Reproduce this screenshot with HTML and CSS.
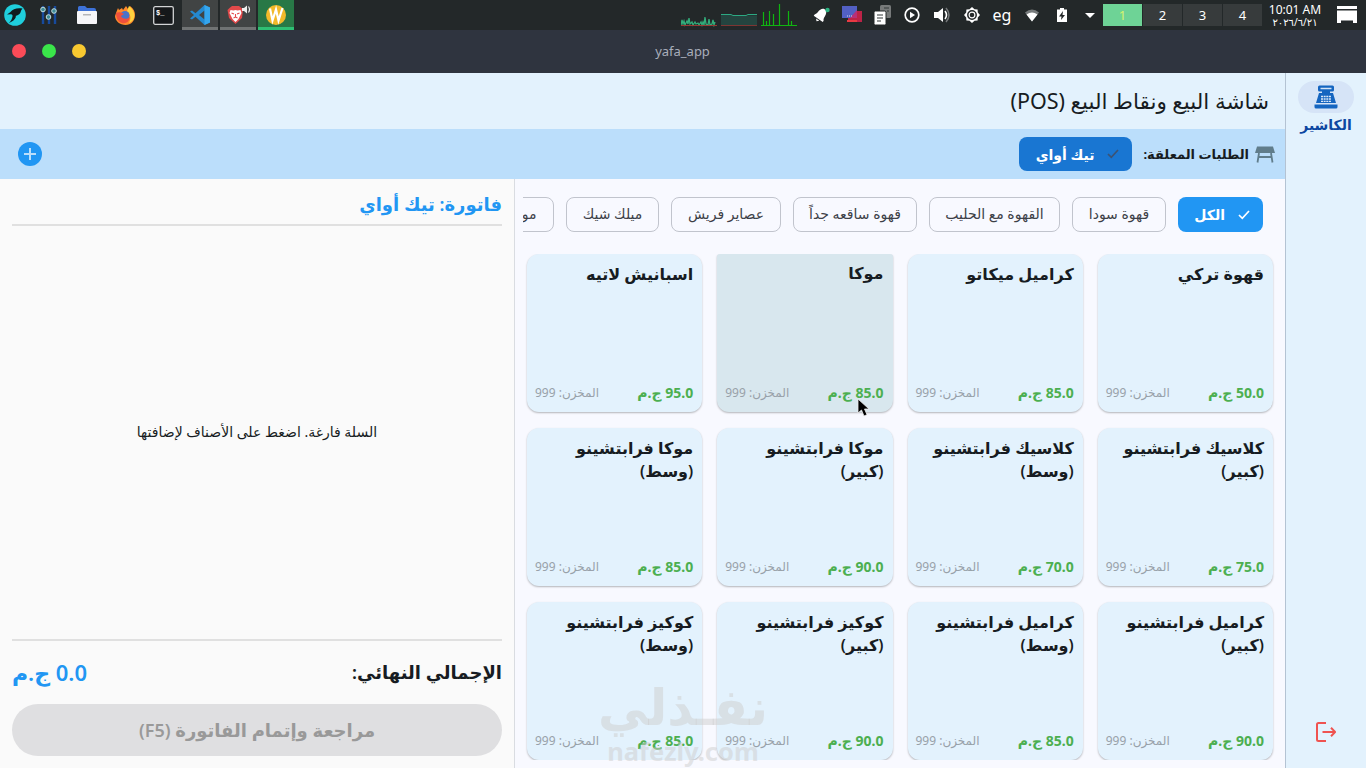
FILE: index.html
```html
<!DOCTYPE html>
<html lang="ar">
<head>
  <meta charset="UTF-8">
  <meta name="viewport" content="width=device-width, initial-scale=1.0">
  <title>yafa_app</title>
  <link rel="stylesheet" href="styles.css">
</head>
<body>
  <!-- Desktop panel -->
  <div class="taskbar">
    <div class="launchers">
      <div class="launch menu">
        <svg width="22" height="22" viewBox="0 0 22 22"><circle cx="11" cy="11" r="10.800" fill="#1fcfdc"/><path d="M18.500 4.500C14 3.500 8.500 4.500 6.500 8L3 10.500l4-.3c1.300.3 1.800 1 1.500 2.300-.5 2.500-1.500 4.500-3.500 6.500 3.500-1.500 6-3.500 7-6.300l-.5-.7c3-.7 5-2.500 5.300-4.500.2-1.200.8-2 1.700-3z" fill="#101a1d"/></svg>
      </div>
      <div class="launch">
        <svg width="18" height="20" viewBox="0 0 18 20"><path d="M3 1v18M9 1v18M15 1v18" stroke="#174a9c" stroke-width="2.400"/><g fill="#3e8b98" stroke="#c4dfe0" stroke-width="1"><circle cx="3" cy="4.500" r="2.300"/><circle cx="8.500" cy="12" r="2.300"/><circle cx="14" cy="6" r="2.300"/></g></svg>
      </div>
      <div class="launch">
        <svg width="20" height="18" viewBox="0 0 20 18"><path d="M1 1.500Q1 0 2.500 0H8l2 2h7q2 0 2 2v5H1z" fill="#3d72d8"/><rect y="5" width="20" height="13" rx="1" fill="#f6f6f8"/><rect x="6" y="8" width="8" height="1.500" fill="#b5b5b8"/></svg>
      </div>
      <div class="launch">
        <svg width="20" height="20" viewBox="0 0 20 20"><path d="M1 8l2-5 1 2 3-2 1 2 3-4 2 3 2-3c4 3 5 6 5 9 0 6-4 10-9.500 10S0 16 0 11z" fill="#ff8a2b"/><path d="M14 1c5 4 6 8 5 12-1 3-3 4-5 5 3-6 1-9-2-12z" fill="#ffd23f"/><circle cx="10" cy="10.500" r="4.500" fill="#4a73c9"/><path d="M1 8c2-1 5-1 8 1l-3 2c1 3 6 4 9 1-1 5-4 7-8 6-4-1-6-5-6-10z" fill="#f0503c"/></svg>
      </div>
      <div class="launch">
        <svg width="21" height="19" viewBox="0 0 21 19"><rect x=".7" y=".7" width="19.600" height="17.600" rx="1.500" fill="#15181a" stroke="#d2d4d5" stroke-width="1.300"/><text x="3" y="9" class="prompt">$_</text></svg>
      </div>
      <div class="launch task">
        <svg width="20" height="20" viewBox="0 0 20 20"><path d="M14.500 0L20 2.500v15L14.500 20 5.500 11.800 2 14.500 0 13.500 4 10 0 6.500l2-1 3.500 2.700zM14.500 5.500L9 10l5.500 4.500z" fill="#2489d0"/><path d="M14.500 0L20 2.500v15L14.500 20z" fill="#35a6ee"/></svg>
      </div>
      <div class="launch task">
        <svg width="25" height="20" viewBox="0 0 25 20"><path d="M3.500 3L6 1h7l2.500 2 1.500 2-1 8-6.500 6L3 13 1.500 5z" fill="#e2494a"/><path d="M4.500 5l3 .5L9.500 5l2 .5 3-.5 1 3-2 4 -1 2-3 3-3-3-1-2-2-4z" fill="#fff"/><path d="M5.500 8l2.500 1M13.500 8L11 9M9.500 9v3M7.500 13l2-1 2 1" fill="none" stroke="#e2494a" stroke-width="1.100"/><path d="M16 3h2l3-2.500v8L18 6h-2z" fill="#eee"/><path d="M22.500 1.500q2 3 0 6" fill="none" stroke="#eee" stroke-width="1.200"/></svg>
      </div>
      <div class="launch task current">
        <svg width="20" height="20" viewBox="0 0 20 20"><circle cx="10" cy="10" r="10" fill="#f2b92a"/><path d="M4 3.500l2.500 12L10 4.500l2.500 11L16.500 3" fill="none" stroke="#fff" stroke-width="2.200"/></svg>
      </div>
    </div>

    <div class="graphs">
      <svg width="36" height="24" viewBox="0 0 36 24"><path d="M0 22l1-5 1 4 1-3 1 4 2-4 1 3 1-6 1 6 2-2 1 3 2-3 1 2 2-1 1 2 2-3 1 3 1-3 1 3 1-8 1 7 2 1 1-6 1 6 2-1 1-4 1 5 1-3" fill="none" stroke="#32ad7a" stroke-width="1.300"/><path d="M0 22.500h36" stroke="#963b34"/></svg>
      <svg width="36" height="24" viewBox="0 0 36 24"><path d="M0 11.500h10l2 1h24v10H0z" fill="#24443f"/><path d="M0 11.500h10l2 1h13l2-1h9" fill="none" stroke="#2ca982"/><path d="M0 22.500h36" stroke="#7d3532"/></svg>
      <svg width="36" height="24" viewBox="0 0 36 24"><path d="M2.500 9v13M5.500 18v4M8.500 8v14M12.500 11v11M18.500 1v21M27.500 8v14M30.500 18v4M0 22.500h36" fill="none" stroke="#10b510" stroke-width="1.200"/></svg>
    </div>

    <div class="tray">
      <div class="slot"><svg width="18" height="18" viewBox="0 0 18 18"><g transform="rotate(35 8 8)"><path d="M3 12c2-2 1-5 2-7 1-4 6-4 7 0 1 2 0 5 2 7v1.500H3zM6.500 14.500h4l-2 2z" fill="#fff"/></g><circle cx="14.500" cy="4" r="2.200" fill="#2bb381"/></svg></div>
      <div class="slot"><svg width="20" height="18" viewBox="0 0 20 18"><rect x="6" y="5" width="14" height="11" fill="#bc2347"/><rect width="15" height="12" fill="#5260c3"/><path d="M8 12l7-8v8z" fill="#b72f78"/><path d="M5 10h6" stroke="#ddd" stroke-dasharray="1 1"/><path d="M5 14h10v2H5z" fill="#e83a42"/></svg></div>
      <div class="slot"><svg width="18" height="20" viewBox="0 0 18 20"><rect x="7" y="0" width="11" height="13" rx="1.500" fill="#777a7a"/><rect x="1" y="6" width="12" height="14" rx="1.500" fill="#fff" stroke="#242829"/><path d="M4 10h6M4 13h6M4 16h4M11 3h5M14 6h2" stroke="#333838" stroke-width="1.200"/></svg></div>
      <div class="slot"><svg width="16" height="16" viewBox="0 0 16 16"><circle cx="8" cy="8" r="6.800" fill="none" stroke="#fff" stroke-width="1.700"/><path d="M6 4.700v6.600L11 8z" fill="#fff"/></svg></div>
      <div class="slot"><svg width="17" height="16" viewBox="0 0 17 16"><path d="M0 5h4l5-4v14l-5-4H0z" fill="#fff"/><path d="M11 4q3 4 0 8" fill="none" stroke="#fff" stroke-width="1.600"/><path d="M12 1q6 7 0 14" fill="none" stroke="#737778" stroke-width="1.500"/></svg></div>
      <div class="slot"><svg width="16" height="16" viewBox="0 0 16 16"><path d="M8 0l2.500 2.200 3.100.2.200 3.100L16 8l-2.200 2.500-.2 3.100-3.100.2L8 16l-2.500-2.200-3.100-.2-.2-3.100L0 8l2.200-2.500.2-3.100 3.100-.2z" fill="#fff"/><circle cx="8" cy="8" r="4.200" fill="#fff" stroke="#242829" stroke-width="1.500"/><circle cx="8" cy="8" r="2.300" fill="#242829"/></svg></div>
      <div class="slot lang">eg</div>
      <div class="slot"><svg width="14" height="13" viewBox="0 0 14 13"><path d="M0 3.500Q7-2.500 14 3.500L7 12.500z" fill="#777b7c"/><path d="M1.500 5.500q5.500-4 11 0L7 12.500z" fill="#fff"/></svg></div>
      <div class="slot"><svg width="10" height="14" viewBox="0 0 10 14"><path d="M3 0h4v1.500h3V14H0V1.500h3z" fill="#fff"/><path d="M6 3L2 8.500h2.500L4 12l4-5H5.500z" fill="#242829"/></svg></div>
      <div class="slot caret"><svg width="10" height="5" viewBox="0 0 10 5"><path d="M0 0h10L5 5z" fill="#fff"/></svg></div>
    </div>

    <div class="workspaces">
      <span class="ws active">1</span>
      <span class="ws">2</span>
      <span class="ws">3</span>
      <span class="ws">4</span>
    </div>
    <div class="clock">
      <span class="time">10:01 AM</span>
      <span class="date">٢٠٢٦/٦/٢١</span>
    </div>
    <div class="show-desktop">
      <svg width="20" height="18" viewBox="0 0 20 18"><path d="M0 0h20v3H0zM0 4.500h20V17h-4v-2.500H4V17H0z" fill="#fff"/></svg>
    </div>
  </div>

  <!-- Window title bar -->
  <div class="titlebar">
    <div class="win-buttons">
      <span class="dot red"></span>
      <span class="dot green"></span>
      <span class="dot yellow"></span>
    </div>
    <span class="win-title">yafa_app</span>
  </div>

  <div class="app" dir="rtl">
    <!-- Navigation rail -->
    <nav class="rail">
      <div class="rail-item">
        <div class="rail-pill">
          <svg width="24" height="24" viewBox="0 0 24 24"><path d="M5.500.5h13q1.500 0 1.500 1.500v3q0 1.500-1.500 1.500H16V8h3l3 10H2L5 8h3V6.500H5.500Q4 6.500 4 5V2Q4 .5 5.500.5zM6.500 2.700v1.600h11V2.700z" fill="#1565c0" fill-rule="evenodd"/><path d="M.5 19.500h23V22q0 1.500-1.500 1.500H2Q.5 23.500.5 22z" fill="#1565c0"/><path d="M7 11.500h10M7 14h10M7 16.300h10" stroke="#dbe8f8" stroke-width="1.300" stroke-dasharray="2 .65"/></svg>
        </div>
        <span class="rail-label">الكاشير</span>
      </div>
      <div class="logout">
        <svg width="20" height="20" viewBox="0 0 20 20"><path d="M10 1H2.500Q1 1 1 2.500v15Q1 19 2.500 19H10M6.500 10H19M15 5.800l4.200 4.200-4.200 4.200" fill="none" stroke="#ef5350" stroke-width="2"/></svg>
      </div>
    </nav>

    <main class="main">
      <header class="app-header">
        <h1 class="app-title">شاشة البيع ونقاط البيع (POS)</h1>
      </header>

      <div class="orders-bar">
        <svg class="table-icon" width="20" height="17" viewBox="0 0 20 17"><path d="M2 .500h16L20 7H0z" fill="#607d8b"/><path d="M4 7L2.500 16.500M16 7l1.500 9.500M3.500 11h13" fill="none" stroke="#607d8b" stroke-width="1.800"/></svg>
        <span class="orders-label">الطلبات المعلقة:</span>
        <div class="order-chip">
          <svg width="12" height="10" viewBox="0 0 12 10"><path d="M1 5l3.300 3.300L11 1" fill="none" stroke="#3c5374" stroke-width="1.700"/></svg>
          <span>تيك أواي</span>
        </div>
        <div class="add-order">
          <svg width="12" height="12" viewBox="0 0 12 12"><path d="M6 0v12M0 6h12" stroke="#bbdefb" stroke-width="2"/></svg>
        </div>
      </div>

      <div class="content">
        <section class="products">
          <div class="chips">
            <div class="chip selected">
              <svg width="12" height="10" viewBox="0 0 12 10"><path d="M1 5l3.300 3.300L11 1" fill="none" stroke="#fff" stroke-width="1.700"/></svg>
              <span>الكل</span>
            </div>
            <div class="chip soda">قهوة سودا</div>
            <div class="chip milk">القهوة مع الحليب</div>
            <div class="chip iced">قهوة ساقعه جداً</div>
            <div class="chip juice">عصاير فريش</div>
            <div class="chip shake">ميلك شيك</div>
            <div class="chip mojito">موهيتو</div>
          </div>

          <div class="grid">
            <div class="card">
              <div class="name">قهوة تركي</div>
              <div class="info"><span class="price">50.0 ج.م</span><span class="stock">المخزن: 999</span></div>
            </div>
            <div class="card">
              <div class="name">كراميل ميكاتو</div>
              <div class="info"><span class="price">85.0 ج.م</span><span class="stock">المخزن: 999</span></div>
            </div>
            <div class="card hovered">
              <div class="name">موكا</div>
              <div class="info"><span class="price">85.0 ج.م</span><span class="stock">المخزن: 999</span></div>
            </div>
            <div class="card">
              <div class="name">اسبانيش لاتيه</div>
              <div class="info"><span class="price">95.0 ج.م</span><span class="stock">المخزن: 999</span></div>
            </div>
            <div class="card">
              <div class="name">كلاسيك فرابتشينو<br>(كبير)</div>
              <div class="info"><span class="price">75.0 ج.م</span><span class="stock">المخزن: 999</span></div>
            </div>
            <div class="card">
              <div class="name">كلاسيك فرابتشينو<br>(وسط)</div>
              <div class="info"><span class="price">70.0 ج.م</span><span class="stock">المخزن: 999</span></div>
            </div>
            <div class="card">
              <div class="name">موكا فرابتشينو<br>(كبير)</div>
              <div class="info"><span class="price">90.0 ج.م</span><span class="stock">المخزن: 999</span></div>
            </div>
            <div class="card">
              <div class="name">موكا فرابتشينو<br>(وسط)</div>
              <div class="info"><span class="price">85.0 ج.م</span><span class="stock">المخزن: 999</span></div>
            </div>
            <div class="card">
              <div class="name">كراميل فرابتشينو<br>(كبير)</div>
              <div class="info"><span class="price">90.0 ج.م</span><span class="stock">المخزن: 999</span></div>
            </div>
            <div class="card">
              <div class="name">كراميل فرابتشينو<br>(وسط)</div>
              <div class="info"><span class="price">85.0 ج.م</span><span class="stock">المخزن: 999</span></div>
            </div>
            <div class="card">
              <div class="name">كوكيز فرابتشينو<br>(كبير)</div>
              <div class="info"><span class="price">90.0 ج.م</span><span class="stock">المخزن: 999</span></div>
            </div>
            <div class="card">
              <div class="name">كوكيز فرابتشينو<br>(وسط)</div>
              <div class="info"><span class="price">85.0 ج.م</span><span class="stock">المخزن: 999</span></div>
            </div>
          </div>
        </section>

        <!-- Invoice -->
        <section class="cart">
          <h2 class="cart-title">فاتورة: تيك أواي</h2>
          <div class="cart-body">السلة فارغة. اضغط على الأصناف لإضافتها</div>
          <div class="total">
            <span class="total-label">الإجمالي النهائي:</span>
            <span class="total-value">0.0 ج.م</span>
          </div>
          <button class="checkout" disabled>مراجعة وإتمام الفاتورة (F5)</button>
        </section>
      </div>
    </main>
  </div>

  <div class="watermark">
    <span class="wm-ar" dir="rtl">نفـذلي</span>
    <span class="wm-en">nafezly.com</span>
  </div>
  <svg class="cursor" width="14" height="20" viewBox="0 0 14 20"><path d="M1 1v14l3.500-3 2.500 6 3-1.300L7.500 11H12z" fill="#000" stroke="#eee" stroke-width=".8"/></svg>
</body>
</html>
```
FILE: styles.css
```css
/* General Styling */
* {
  box-sizing: border-box;
}

body {
  margin: 0;
  width: 1366px;
  height: 768px;
  overflow: hidden;
  position: relative;
  font-family: "Noto Sans", "DejaVu Sans", sans-serif;
  color: #171c22;
  display: flex;
  flex-direction: column;
}

h1, h2 {
  margin: 0;
}

svg {
  display: block;
  flex: none;
}

/* Desktop panel */
.taskbar {
  height: 30px;
  flex: none;
  display: flex;
  background: #232829;
  color: #fff;
}

.launchers {
  display: flex;
}

.launch {
  width: 38px;
  display: flex;
  align-items: center;
  justify-content: center;
}

.launch.menu {
  width: 30px;
}

.launch.task {
  width: 36px;
  margin-right: 2px;
  background: #414444;
  border-bottom: 3px solid #707373;
  padding-top: 2px;
}

.launch.current {
  background: #287846;
  border-bottom-color: #2ebf73;
}

.prompt {
  font: bold 7px "Liberation Mono", monospace;
  fill: #fff;
}

.graphs {
  display: flex;
  gap: 4px;
  padding-top: 3px;
  margin-left: auto;
  margin-right: 10px;
}

.tray {
  display: flex;
}

.slot {
  width: 30px;
  display: flex;
  align-items: center;
  justify-content: center;
}

.slot.caret {
  width: 26px;
}

.lang {
  font-size: 16px;
}

.workspaces {
  display: flex;
  gap: 1px;
  width: 160px;
  padding: 4px 1px 4px 0;
}

.ws {
  flex: 1;
  background: #373b3c;
  font-size: 13px;
  line-height: 22px;
  text-align: center;
}

.ws.active {
  background: #6ed396;
  color: #d8f36e;
}

.clock {
  width: 64px;
  display: flex;
  flex-direction: column;
  align-items: center;
  white-space: nowrap;
}

.time {
  font-size: 12px;
  line-height: 14px;
  margin-top: 3px;
}

.date {
  font-size: 10px;
  line-height: 10px;
}

.show-desktop {
  width: 39px;
  display: flex;
  align-items: center;
  justify-content: center;
}

/* Title bar */
.titlebar {
  height: 43px;
  flex: none;
  display: grid;
  grid-template-columns: 1fr auto 1fr;
  align-items: center;
  padding: 0 1px 1px 0;
  background: #2f343f;
}

.win-buttons {
  display: flex;
  gap: 16px;
  padding-left: 12px;
}

.dot {
  width: 14px;
  height: 14px;
  border-radius: 50%;
}

.red {
  background: #fb4b58;
}

.green {
  background: #3ae54a;
}

.yellow {
  background: #f8c830;
}

.win-title {
  font-size: 13px;
  color: #a9aebb;
}

/* App */
.app {
  flex: 1;
  min-height: 0;
  display: flex;
}

.rail {
  width: 81px;
  flex: none;
  background: #e3f2fd;
  border-left: 1px solid #b4c3d3;
  display: flex;
  flex-direction: column;
  justify-content: space-between;
  align-items: center;
  padding: 8px 0 26px;
}

.rail-item {
  display: flex;
  flex-direction: column;
  align-items: center;
}

.rail-pill {
  width: 56px;
  height: 32px;
  border-radius: 16px;
  background: #d6e4f7;
  display: flex;
  align-items: center;
  justify-content: center;
}

.rail-label {
  margin-top: 3px;
  font-size: 14px;
  line-height: 18px;
  font-weight: bold;
  color: #0d47a1;
}

.main {
  flex: 1;
  min-width: 0;
  display: flex;
  flex-direction: column;
}

.app-header {
  height: 56px;
  flex: none;
  padding: 0 16px 2px;
  display: flex;
  align-items: center;
  background: #e3f2fd;
}

.app-title {
  font-size: 21.5px;
  font-weight: normal;
}

.orders-bar {
  height: 50px;
  flex: none;
  display: flex;
  align-items: center;
  padding: 0 10px 0 18px;
  background: #bbdefb;
}

.orders-label {
  margin: 0 6px 0 11px;
  font-size: 13px;
  font-weight: bold;
}

.order-chip {
  width: 113px;
  height: 34px;
  border-radius: 8px;
  background: #1976d2;
  color: #fff;
  font-size: 14px;
  font-weight: bold;
  display: flex;
  align-items: center;
  gap: 13px;
  padding-right: 13px;
}

.add-order {
  width: 24px;
  height: 24px;
  margin-right: auto;
  border-radius: 50%;
  background: #2196f3;
  display: flex;
  align-items: center;
  justify-content: center;
}

.content {
  flex: 1;
  min-height: 0;
  display: flex;
}

/* Products */
.products {
  flex: 1;
  min-width: 0;
  padding: 18px 8px 8px;
  background: #f8f9ff;
  display: flex;
  flex-direction: column;
}

.chips {
  height: 35px;
  flex: none;
  display: flex;
  gap: 12px;
  padding-right: 14px;
  overflow: hidden;
}

.chip {
  height: 35px;
  flex: none;
  border: 1px solid #c1c4cd;
  border-radius: 8px;
  font-size: 14px;
  line-height: 32px;
  text-align: center;
  white-space: nowrap;
  color: #3c4047;
}

.chip.selected {
  width: 85px;
  border: none;
  background: #2196f3;
  color: #fff;
  font-weight: bold;
  display: flex;
  align-items: center;
  gap: 13px;
  padding-right: 13px;
}

.soda {
  width: 94px;
}

.milk {
  width: 131px;
}

.iced {
  width: 124px;
}

.juice {
  width: 110px;
}

.shake {
  width: 93px;
}

.mojito {
  width: 73px;
}

.grid {
  flex: 1;
  min-height: 0;
  margin-top: 22px;
  padding: 0 4px;
  overflow: hidden;
  display: grid;
  grid-template-columns: repeat(4, 1fr);
  grid-auto-rows: 158px;
  gap: 16px 15px;
}

.card {
  display: flex;
  flex-direction: column;
  justify-content: space-between;
  padding: 9px 9px 9px 8px;
  border-radius: 12px;
  background: #e3f2fd;
  box-shadow: 0 1px 2px rgba(0, 0, 0, 0.28);
}

.card.hovered {
  background: #d8e7ee;
  border-radius: 3px 3px 12px 12px;
  padding-top: 8px;
}

.name {
  font-size: 16px;
  line-height: 23px;
  font-weight: 600;
}

.info {
  display: flex;
  justify-content: space-between;
  align-items: center;
  line-height: 20px;
}

.price {
  font-size: 14px;
  font-weight: bold;
  color: #4caf50;
}

.stock {
  font-size: 12px;
  color: #98a1a9;
}

/* Cart */
.cart {
  width: 515px;
  flex: none;
  padding: 12px;
  background: #fafafa;
  border-right: 1px solid #d9dce1;
  display: flex;
  flex-direction: column;
}

.cart-title {
  height: 35px;
  border-bottom: 2px solid #e0e0e0;
  font-size: 18px;
  line-height: 27px;
  font-weight: 600;
  color: #2196f3;
}

.cart-body {
  flex: 1;
  display: flex;
  align-items: center;
  justify-content: center;
  padding-bottom: 2px;
  font-size: 14px;
}

.total {
  height: 65px;
  border-top: 2px solid #e0e0e0;
  padding-bottom: 2px;
  display: flex;
  align-items: center;
  justify-content: space-between;
}

.total-label {
  font-size: 18px;
  font-weight: 600;
}

.total-value {
  font-size: 22px;
  font-weight: 600;
  color: #2196f3;
}

.checkout {
  height: 52px;
  border: none;
  border-radius: 26px;
  background: #dfdfe1;
  color: #999;
  font-family: inherit;
  font-size: 18px;
  font-weight: 600;
}

/* Overlays */
.watermark {
  position: absolute;
  left: 600px;
  top: 674px;
  width: 166px;
  height: 92px;
  display: flex;
  flex-direction: column;
  align-items: center;
  color: rgba(205, 205, 205, 0.5);
  font-weight: bold;
  white-space: nowrap;
  pointer-events: none;
}

.wm-ar {
  font-size: 50px;
  line-height: 64px;
}

.wm-en {
  font-size: 25.5px;
  line-height: 26px;
}

.cursor {
  position: absolute;
  left: 857px;
  top: 398px;
}
```
